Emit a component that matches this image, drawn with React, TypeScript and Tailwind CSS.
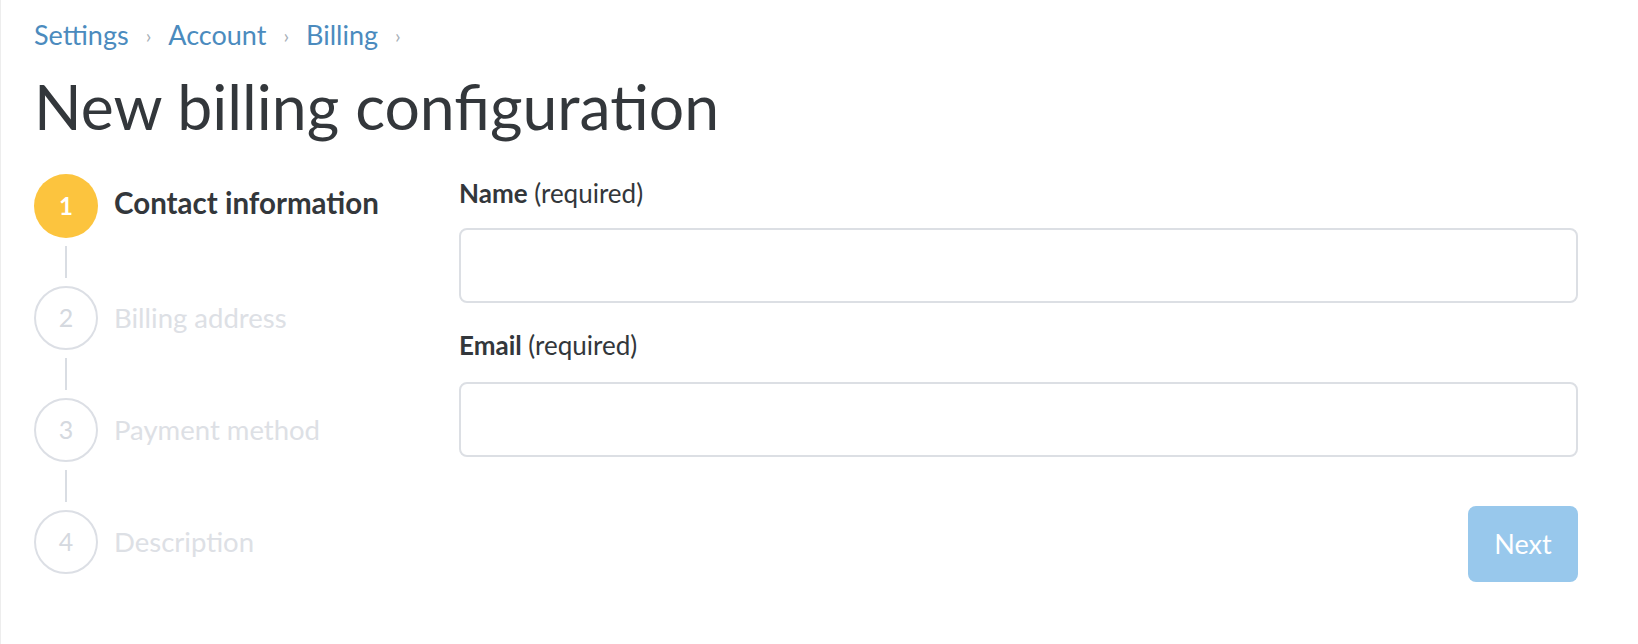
import React from 'react';

const steps = [
  { n: 1, label: 'Contact information', active: true },
  { n: 2, label: 'Billing address', active: false },
  { n: 3, label: 'Payment method', active: false },
  { n: 4, label: 'Description', active: false },
];

const font = { fontFamily: 'Lato, "Open Sans", sans-serif' };

export default function App() {
  return (
    <div style={font} className="min-h-[644px] bg-white border-l border-[#ededed] pl-[33px] pr-[60px] pt-[19px]">
      {/* Breadcrumb */}
      <nav className="flex items-center text-[27px] leading-[32px] text-[#4b8bbe]">
        <a className="hover:underline">Settings</a>
        <span className="mx-[17px] text-[20px] text-[#a7afb7]">›</span>
        <a className="hover:underline">Account</a>
        <span className="mx-[17px] text-[20px] text-[#a7afb7]">›</span>
        <a className="hover:underline">Billing</a>
        <span className="mx-[17px] text-[20px] text-[#a7afb7]">›</span>
      </nav>

      <h1 className="mt-[16px] text-[62.5px] leading-[77px] text-[#33373b] font-normal">New billing configuration</h1>

      <div className="mt-[30px] flex">
        {/* Stepper */}
        <ol className="w-[425px] shrink-0">
          {steps.map((s, i) => (
            <li key={s.n}>
              {i > 0 && <div className="ml-[31px] my-[8px] h-[32px] w-[2px] bg-[#d9dde3]" />}
              <div className="flex items-center gap-[16px]">
                {s.active ? (
                  <span className="flex h-16 w-16 items-center justify-center rounded-full bg-[#fcc43e] text-[24px] font-bold text-white">
                    {s.n}
                  </span>
                ) : (
                  <span className="flex h-16 w-16 items-center justify-center rounded-full border-2 border-[#dcdfe5] text-[25px] text-[#d5d9df]">
                    {s.n}
                  </span>
                )}
                <span
                  className={
                    s.active
                      ? 'mb-[5px] text-[29.5px] font-bold text-[#33373b]'
                      : 'text-[27.5px] text-[#dde0e5]'
                  }
                >
                  {s.label}
                </span>
              </div>
            </li>
          ))}
        </ol>

        {/* Form */}
        <form className="flex-1 pt-[4px]">
          <label className="block text-[26px] leading-[30px] text-[#33373b]">
            <span className="font-bold">Name</span> (required)
          </label>
          <input className="mt-[20px] block h-[75px] w-full rounded-[8px] border-2 border-[#dcdfe4] px-4 text-[24px] outline-none" />

          <label className="mt-[27px] block text-[26px] leading-[30px] text-[#33373b]">
            <span className="font-bold">Email</span> (required)
          </label>
          <input className="mt-[22px] block h-[75px] w-full rounded-[8px] border-2 border-[#dcdfe4] px-4 text-[24px] outline-none" />

          <div className="mt-[49px] flex justify-end">
            <button
              type="button"
              className="h-[76px] w-[110px] rounded-[8px] bg-[#98c8ec] text-[27px] text-white"
            >
              Next
            </button>
          </div>
        </form>
      </div>
    </div>
  );
}
